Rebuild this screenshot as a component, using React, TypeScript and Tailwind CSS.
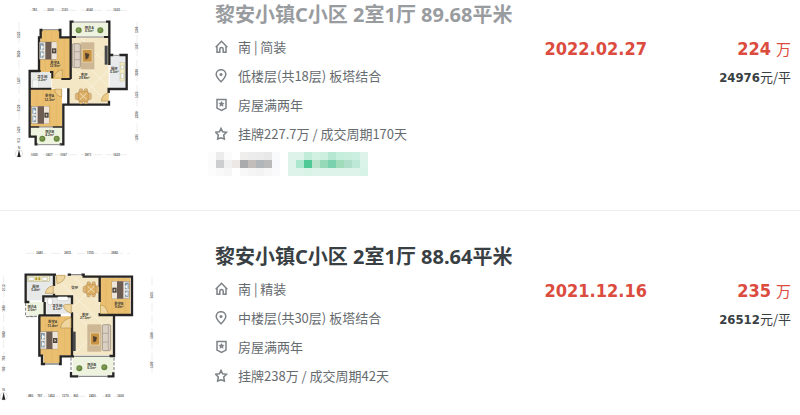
import type { ReactNode } from 'react';

interface Listing {
  title: string;
  visited: boolean;
  facing: string;
  floor: string;
  years: string;
  deal: string;
  date: string;
  total: string;
  unit: string;
}

const listings: Listing[] = [
  {
    title: '黎安小镇C小区 2室1厅 89.68平米',
    visited: true,
    facing: '南 | 简装',
    floor: '低楼层(共18层) 板塔结合',
    years: '房屋满两年',
    deal: '挂牌227.7万 / 成交周期170天',
    date: '2022.02.27',
    total: '224',
    unit: '24976',
  },
  {
    title: '黎安小镇C小区 2室1厅 88.64平米',
    visited: false,
    facing: '南 | 精装',
    floor: '中楼层(共30层) 板塔结合',
    years: '房屋满两年',
    deal: '挂牌238万 / 成交周期42天',
    date: '2021.12.16',
    total: '235',
    unit: '26512',
  },
];

const grayCells = [
  ['#fcfcfc', '#ececec', '#fbfbfb', '#ffffff', '#efeeed', '#ececec', '#ebebeb', '#e8e8e8', '#f9fafc'],
  ['#fbfbfb', '#ccced0', '#f0f0f0', '#ede8e6', '#aaabad', '#c2bcba', '#b1b6bb', '#bbbaba', '#f8f9fc'],
  ['#fcfcfc', '#f9f9f9', '#f6f6f6', '#ffffff', '#f8f8f8', '#f5f5f5', '#f3f3f3', '#f7f7f7', '#fafafc'],
];

const greenCells = [
  ['#def4ea', '#def4ea', '#c0ecd9', '#d3f1e3', '#cdefe0', '#b5e7d2', '#c6eedd', '#c9eedd', '#cbefe0', '#def4ea'],
  ['#def4ea', '#abe6ce', '#4fca97', '#b9e3cb', '#95d9b9', '#79d1ad', '#a0dcb9', '#afdecb', '#bde8d8', '#dbf4ea'],
  ['#def4ea', '#def4ea', '#daf3e7', '#def4ea', '#def4ea', '#def4ea', '#def4ea', '#def4ea', '#def4ea', '#d7f2e6'],
];

function Mosaic({ cells }: { cells: string[][] }) {
  const cols = cells[0].length;
  return (
    <svg width={cols * 8} height="24" viewBox={`0 0 ${cols} 3`} shapeRendering="crispEdges" aria-hidden="true">
      {cells.map((row, y) =>
        row.map((fill, x) => <rect key={`${x}-${y}`} x={x} y={y} width="1" height="1" fill={fill} />),
      )}
    </svg>
  );
}

function Icon({ children }: { children: ReactNode }) {
  return (
    <svg
      className="shrink-0 text-[#7c8286]"
      width="14"
      height="14"
      viewBox="0 0 14 14"
      fill="none"
      stroke="currentColor"
      strokeWidth="1.5"
      aria-hidden="true"
    >
      {children}
    </svg>
  );
}

const HomeIcon = () => (
  <Icon>
    <path d="M.7 7.2 6.5 1.3l5.8 5.9M2 6.5v5.8h2.5M11 6.5v5.8H8.5" />
    <path d="M4.8 13V9.3a1.7 1.7 0 0 1 3.4 0V13" />
  </Icon>
);

const PinIcon = () => (
  <Icon>
    <path d="M6 12.8C3.2 10 1.2 7.9 1.2 5.5a4.8 4.8 0 0 1 9.6 0C10.8 7.9 8.8 10 6 12.8z" />
    <circle cx="6" cy="5.5" r="1.5" fill="currentColor" stroke="none" />
  </Icon>
);

const ShieldIcon = () => (
  <Icon>
    <path d="M2 1.5h9v8.6L6.500 12.300 2 10.100z" />
    <path
      d="m6.500 3.600.8 1.500 1.700.2-1.200 1.200.3 1.700-1.600-.8-1.600.8.3-1.700L4 5.300l1.700-.2z"
      fill="currentColor"
      stroke="currentColor"
      strokeWidth="0.6"
    />
  </Icon>
);

const StarIcon = () => (
  <Icon>
    <path d="m6 1.400 1.600 3.400 3.900.5-2.800 2.700.7 4L6 10.800 2.600 12l.7-4L.5 5.300l3.900-.5z" />
  </Icon>
);

function Bed({ x, y, flip = false }: { x: number; y: number; flip?: boolean }) {
  return (
    <g transform={flip ? `translate(${x + 62} ${y}) scale(-1 1)` : `translate(${x} ${y})`}>
      <rect width="52" height="52" fill="#e9e2d8" stroke="#6d6055" />
      <rect x="2" y="4" width="11" height="19" fill="#7f98aa" />
      <rect x="2" y="28" width="11" height="19" fill="#8fa4b1" />
      <path d="m5 8 9 8-9 8zM5 30l9 7-9 8z" fill="#f3f6f7" />
      <rect x="18" width="19" height="52" fill="#6c5c52" />
      <rect x="37" y="1" width="15" height="50" fill="#eee5da" />
      <rect x="38" y="19" width="13" height="15" fill="#4c443d" />
      <path d="m42 22 6 4-5 5z" fill="#d8cdbd" />
    </g>
  );
}

function Dining({ x, y }: { x: number; y: number }) {
  return (
    <g transform={`translate(${x} ${y})`} stroke="#9a7243">
      <rect x="-12" y="-23" width="10" height="46" rx="4" fill="#dfb878" />
      <rect x="3" y="-23" width="10" height="46" rx="4" fill="#dfb878" />
      <rect x="-24" y="-10" width="48" height="20" rx="5" fill="#dfb878" />
      <rect x="-15" y="-15" width="30" height="30" rx="5" fill="#dcae62" />
      <path d="m-10-9 20 18M10-9l-20 18" stroke="#f0dfbd" strokeWidth="3" />
    </g>
  );
}

function Plant({ x, y }: { x: number; y: number }) {
  return (
    <g>
      <circle cx={x} cy={y} r="9" fill="#66863f" />
      <circle cx={x - 1} cy={y - 1} r="5" fill="#7f9b54" />
    </g>
  );
}

function Label({ x, y, name, area }: { x: number; y: number; name: string; area: string }) {
  return (
    <text x={x} y={y} fontSize="10" fontWeight="bold" textAnchor="middle" fill="#3c3a34">
      {name}
      <tspan x={x} dy="10">
        {area}
      </tspan>
    </text>
  );
}

function Compass({ x, y }: { x: number; y: number }) {
  return (
    <g transform={`translate(${x} ${y})`}>
      <circle r="11" fill="none" stroke="#c5c5c5" strokeWidth="1.5" />
      <path d="m0-12 5 22H-5z" fill="#222" />
      <text y="-15" fontSize="11" textAnchor="middle" fill="#444">
        N
      </text>
    </g>
  );
}

// dimension strings along a wall, `at` is the centre of each one
function Dims({ items, fixed, vertical = false }: { items: [number, string][]; fixed: number; vertical?: boolean }) {
  return (
    <g fontSize="9" fontWeight="bold" textAnchor="middle" fill="#666">
      {items.map(([at, text]) => (
        <text
          key={at}
          x={vertical ? 0 : at}
          y={vertical ? 3 : fixed + 3}
          transform={vertical ? `translate(${fixed} ${at}) rotate(-90)` : undefined}
        >
          {text}
        </text>
      ))}
    </g>
  );
}

function PlanA() {
  return (
    <svg
      className="w-40 shrink-0 font-['Liberation_Sans','Noto_Sans_CJK_SC',sans-serif]"
      viewBox="0 0 480 495"
      role="img"
      aria-label="户型图"
    >
      <g stroke="#c9c9c9" strokeDasharray="26 12">
        <path d="M90 31h290M90 464h290M57 66v365M411 66v365" />
      </g>
      <Dims fixed={31} items={[[104, '781'], [152, '3000'], [194, '1120'], [269, '4042'], [350, '1623']]} />
      <Dims fixed={464} items={[[103, '1025'], [148, '3417'], [191, '1067'], [264, '3971'], [350, '1623']]} />
      <Dims fixed={57} vertical items={[[105, '1522'], [162, '3020'], [242, '1427'], [324, '3120'], [390, '1423'], [420, '911']]} />
      <Dims fixed={411} vertical items={[[90, '1200'], [139, '1567'], [217, '3208'], [285, '1425'], [344, '2230'], [412, '1205']]} />

      <path d="M122 90h59v24h30v123h-93zM92 267h94v114H92z" fill="#eabf70" />
      <path d="M136 92v120M155 90v122M174 90v122M193 114v123M110 268v110M130 268v110M150 268v110M170 268v110" stroke="#dfae5c" />
      <path d="M212 111h114v200H203v-46h-48v-28h57z" fill="#f3e7c6" />
      <path d="M215 150l110 110M240 112l85 85M215 200l105 105M325 130 220 235M325 210l-98 98" stroke="#f9f2dd" strokeWidth="3" />
      <rect x="213" y="67" width="115" height="43" fill="#edf3df" />
      <path d="M92 383h96v49h-80v-22H92z" fill="#edf3df" />
      <rect x="92" y="216" width="61" height="47" fill="#e7e8e8" />
      <rect x="329" y="168" width="51" height="98" fill="#e9eaec" />

      <g fill="none" stroke="#262524" strokeWidth="7">
        <path d="M128 90h-6v22h-5v101H89v197h18v23h6M175 90h6v22h31M212 237V65h9M318 65h10v130" />
        <path d="M212 111h16M312 111h15M112 213h10M150 216h7v19M89 266h65M184 237h28" strokeWidth="6" />
        <path d="M327 165h13M358 165h22v102h-54v12M327 302v12H190v119h-11M205 265v47" />
        <path d="M90 381h28M158 381h30" strokeWidth="5" />
      </g>
      <path d="M128 89h47M221 66h97M228 111h84M340 166h18M118 381h40M112 434h70" stroke="#888" strokeWidth="3" />
      <path d="M163 231a26 26 0 0 1 24-22v23M164 267h21v24a24 24 0 0 1-21-24M326 279a24 24 0 0 0-22 24h22" fill="#eccc88" stroke="#b8924f" strokeWidth="2" />

      <Bed x={118} y={126} />
      <Bed x={95} y={319} />
      <rect x="242" y="127" width="41" height="81" fill="#cdb794" />
      <rect x="247" y="149" width="29" height="37" fill="#c99345" stroke="#f2dfb2" strokeWidth="2" />
      <path d="m255 158 13 4-3 12-8 5z" fill="#51402e" />
      <rect x="217" y="131" width="24" height="72" rx="4" fill="#d9cfc2" stroke="#8b7b6e" strokeWidth="2" />
      <path d="M223 133v68M223 155h17M223 179h17" stroke="#a2958a" strokeWidth="2" />
      <rect x="314" y="137" width="9" height="57" fill="#44464a" />
      <rect x="360" y="188" width="14" height="55" fill="#f6f0c1" stroke="#a7a585" />
      <path d="M363 196h8v11h-8zM363 220h8v16h-8z" fill="#fff" stroke="#8a8c79" />
      <rect x="98" y="240" width="18" height="22" fill="#f4f5f5" stroke="#bbb" />
      <Dining x={250} y={289} />
      <Plant x={236} y={91} />
      <Plant x={301} y={91} />
      <Plant x={127} y={416} />
      <Plant x={170} y={416} />
      <Label x={268} y={87} name="阳台A" area="6.5m²" />
      <Label x={165} y={191} name="卧室A" area="12.9m²" />
      <Label x={127} y={233} name="卫生间" area="3.2m²" />
      <Label x={253} y={227} name="客厅" area="29.8m²" />
      <Label x={343} y={210} name="厨房" area="5.5m²" />
      <Label x={149} y={292} name="卧室A" area="12.3m²" />
      <Label x={149} y={399} name="阳台B" area="4.2m²" />
      <Compass x={57} y={461} />
    </svg>
  );
}

function PlanB() {
  return (
    <svg
      className="w-40 shrink-0 font-['Liberation_Sans','Noto_Sans_CJK_SC',sans-serif]"
      viewBox="0 -9 480 489"
      role="img"
      aria-label="户型图"
    >
      <g stroke="#c9c9c9" strokeDasharray="26 12">
        <path d="M78 25h312M78 454h300M11 92v292M456 96v288" />
      </g>
      <Dims fixed={24} items={[[119, '2481'], [203, '2872'], [271, '1705'], [344, '2882']]} />
      <Dims fixed={454} items={[[92, '880'], [119, '797'], [154, '1452'], [196, '1170'], [228, '861'], [277, '2450'], [324, '815'], [362, '1600']]} />
      <Dims fixed={11} vertical items={[[128, '2112'], [190, '1685'], [268, '3802'], [340, '792'], [372, '762']]} />
      <Dims fixed={456} vertical items={[[150, '3431'], [272, '4580'], [360, '1480']]} />

      <path d="M162 91h137v120h39v120H216V210h-2v-56h-52z" fill="#f3e7c6" />
      <path d="M170 100l160 160M220 95l78 78M220 200l110 110M295 110 220 185M335 215l-110 110" stroke="#f9f2dd" strokeWidth="3" />
      <rect x="81" y="92" width="79" height="74" fill="#e7e8e8" />
      <rect x="139" y="156" width="75" height="50" fill="#e7e8e8" />
      <rect x="82" y="170" width="50" height="42" fill="#edf3df" />
      <path d="M118 214h96v117h-32v24h-51v-24h-13zM300 98h91v110h-91z" fill="#eabf70" />
      <path d="M137 215v138M156 215v138M175 215v138M194 215v116M318 98v110M337 98v110M356 98v110M375 98v110" stroke="#dfae5c" />
      <rect x="218" y="336" width="122" height="55" fill="#edf3df" />

      <g fill="none" stroke="#262524" strokeWidth="7">
        <path d="M168 89H77v82h11M203 89h10M244 89h7v6h145v115h-54v123h-14M299 95v76M343 210h-44v-6" />
        <path d="M130 171v-17h86v24M134 171v42M116 211h66M216 202v131M118 211v121h8v25h10M176 357h6v-23h40" />
        <path d="M213 381v13h22M322 394h18v-12M162 91v32M162 146v8" />
      </g>
      <path d="M213 89h31M137 357h39M222 334h106M235 394h87" stroke="#888" strokeWidth="4" />
      <path d="M77 174v41h30M88 214h28M213 338v43M342 338v43" fill="none" stroke="#777" strokeWidth="3" strokeDasharray="9 5" />
      <path d="M169 91h26q0 20-24 25zM136 145q2-19 24-23v23zM190 182q2-4 24-4v26q-20-4-24-22M301 180q18 0 23 26h-23zM181 249q5-25 32-31v31z" fill="#efd69f" stroke="#b8924f" strokeWidth="2" />

      <rect x="82" y="93" width="66" height="17" fill="#f6f0c1" stroke="#8a8c79" />
      <path d="M86 97h16v9H86zM126 97h16v9h-16z" fill="#fff" stroke="#777" />
      <path d="M106 97h6v9h-6zM115 97h6v9h-6z" fill="#b09a31" />
      <rect x="143" y="159" width="14" height="20" rx="5" fill="#fff" stroke="#999" />
      <rect x="172" y="155" width="32" height="12" rx="4" fill="#fff" stroke="#999" />
      <Bed x={326} y={109} flip />
      <Bed x={121} y={260} />
      <Dining x={273} y={133} />
      <rect x="262" y="238" width="42" height="82" fill="#cdb794" />
      <rect x="271" y="264" width="28" height="36" fill="#c99345" stroke="#f2dfb2" strokeWidth="2" />
      <path d="m279 273 12 4-3 12-8 3z" fill="#51402e" />
      <rect x="307" y="239" width="25" height="78" rx="4" fill="#d9cfc2" stroke="#8b7b6e" strokeWidth="2" />
      <path d="M325 241v74M308 265h17M308 291h17" stroke="#a2958a" strokeWidth="2" />
      <rect x="218" y="260" width="9" height="58" fill="#44464a" />
      <Plant x={238} y={370} />
      <Plant x={313} y={367} />
      <Label x={107} y={129} name="厨房" area="5.4m²" />
      <text x="224" y="131" fontSize="10" fontWeight="bold" textAnchor="middle" fill="#3c3a34">
        餐厅
      </text>
      <Label x={96} y={188} name="阳台A" area="2.0m²" />
      <Label x={172} y={185} name="卫生间" area="4.1m²" />
      <Label x={256} y={213} name="客厅" area="27.5m²" />
      <Label x={357} y={179} name="卧室B" area="9.0m²" />
      <Label x={158} y={235} name="卧室A" area="11.4m²" />
      <Label x={275} y={362} name="阳台B" area="6.5m²" />
      <Compass x={11} y={454} />
    </svg>
  );
}

function Detail({ icon, children }: { icon: ReactNode; children: ReactNode }) {
  return (
    <li className="flex h-[29px] items-center gap-[9px] text-[13px] text-[#666b6f]">
      {icon}
      <span className="whitespace-nowrap">{children}</span>
    </li>
  );
}

function ListingRow({ item, plan, tags }: { item: Listing; plan: ReactNode; tags?: ReactNode }) {
  return (
    <li className="flex items-start border-b border-[#ececec] pt-[31px] pb-[34px] first:pt-0 last:border-b-0 last:pb-0">
      {plan}
      <div className="ml-12 flex-1">
        <h2
          className={`px-[7px] font-['Noto_Sans','Noto_Sans_CJK_SC',sans-serif] text-xl leading-[30px] font-bold whitespace-nowrap ${
            item.visited ? 'text-[#999c9f]' : 'text-[#394043]'
          }`}
        >
          <a href="#">{item.title}</a>
        </h2>
        <ul className="mt-[2px] px-[7px]">
          <Detail icon={<HomeIcon />}>{item.facing}</Detail>
          <Detail icon={<PinIcon />}>{item.floor}</Detail>
          <Detail icon={<ShieldIcon />}>{item.years}</Detail>
          <Detail icon={<StarIcon />}>{item.deal}</Detail>
        </ul>
        {tags}
      </div>
      <div className="mr-[9px] grid grid-cols-[104px_144px] pt-[34px] text-right whitespace-nowrap">
        <div className="font-['DejaVu_Sans_Condensed','DejaVu_Sans',sans-serif] text-lg leading-[30px] font-bold text-[#db4c3f]">
          {item.date}
        </div>
        <div>
          <div className="text-[15px] leading-[30px] text-[#db4c3f]">
            <span className="mr-[5px] font-['DejaVu_Sans_Condensed','DejaVu_Sans',sans-serif] text-lg font-bold">
              {item.total}
            </span>
            万
          </div>
          <div className="text-[13px] leading-[26px] text-[#394043]">
            <span className="font-['DejaVu_Sans_Condensed','DejaVu_Sans',sans-serif] font-bold">{item.unit}</span>
            元/平
          </div>
        </div>
      </div>
    </li>
  );
}

export default function App() {
  return (
    <main className="bg-white font-['Noto_Sans_CJK_SC',sans-serif]">
      <ul>
        <ListingRow
          item={listings[0]}
          plan={<PlanA />}
          tags={
            <div className="mt-1 flex gap-2">
              <Mosaic cells={grayCells} />
              <Mosaic cells={greenCells} />
            </div>
          }
        />
        <ListingRow item={listings[1]} plan={<PlanB />} />
      </ul>
    </main>
  );
}
